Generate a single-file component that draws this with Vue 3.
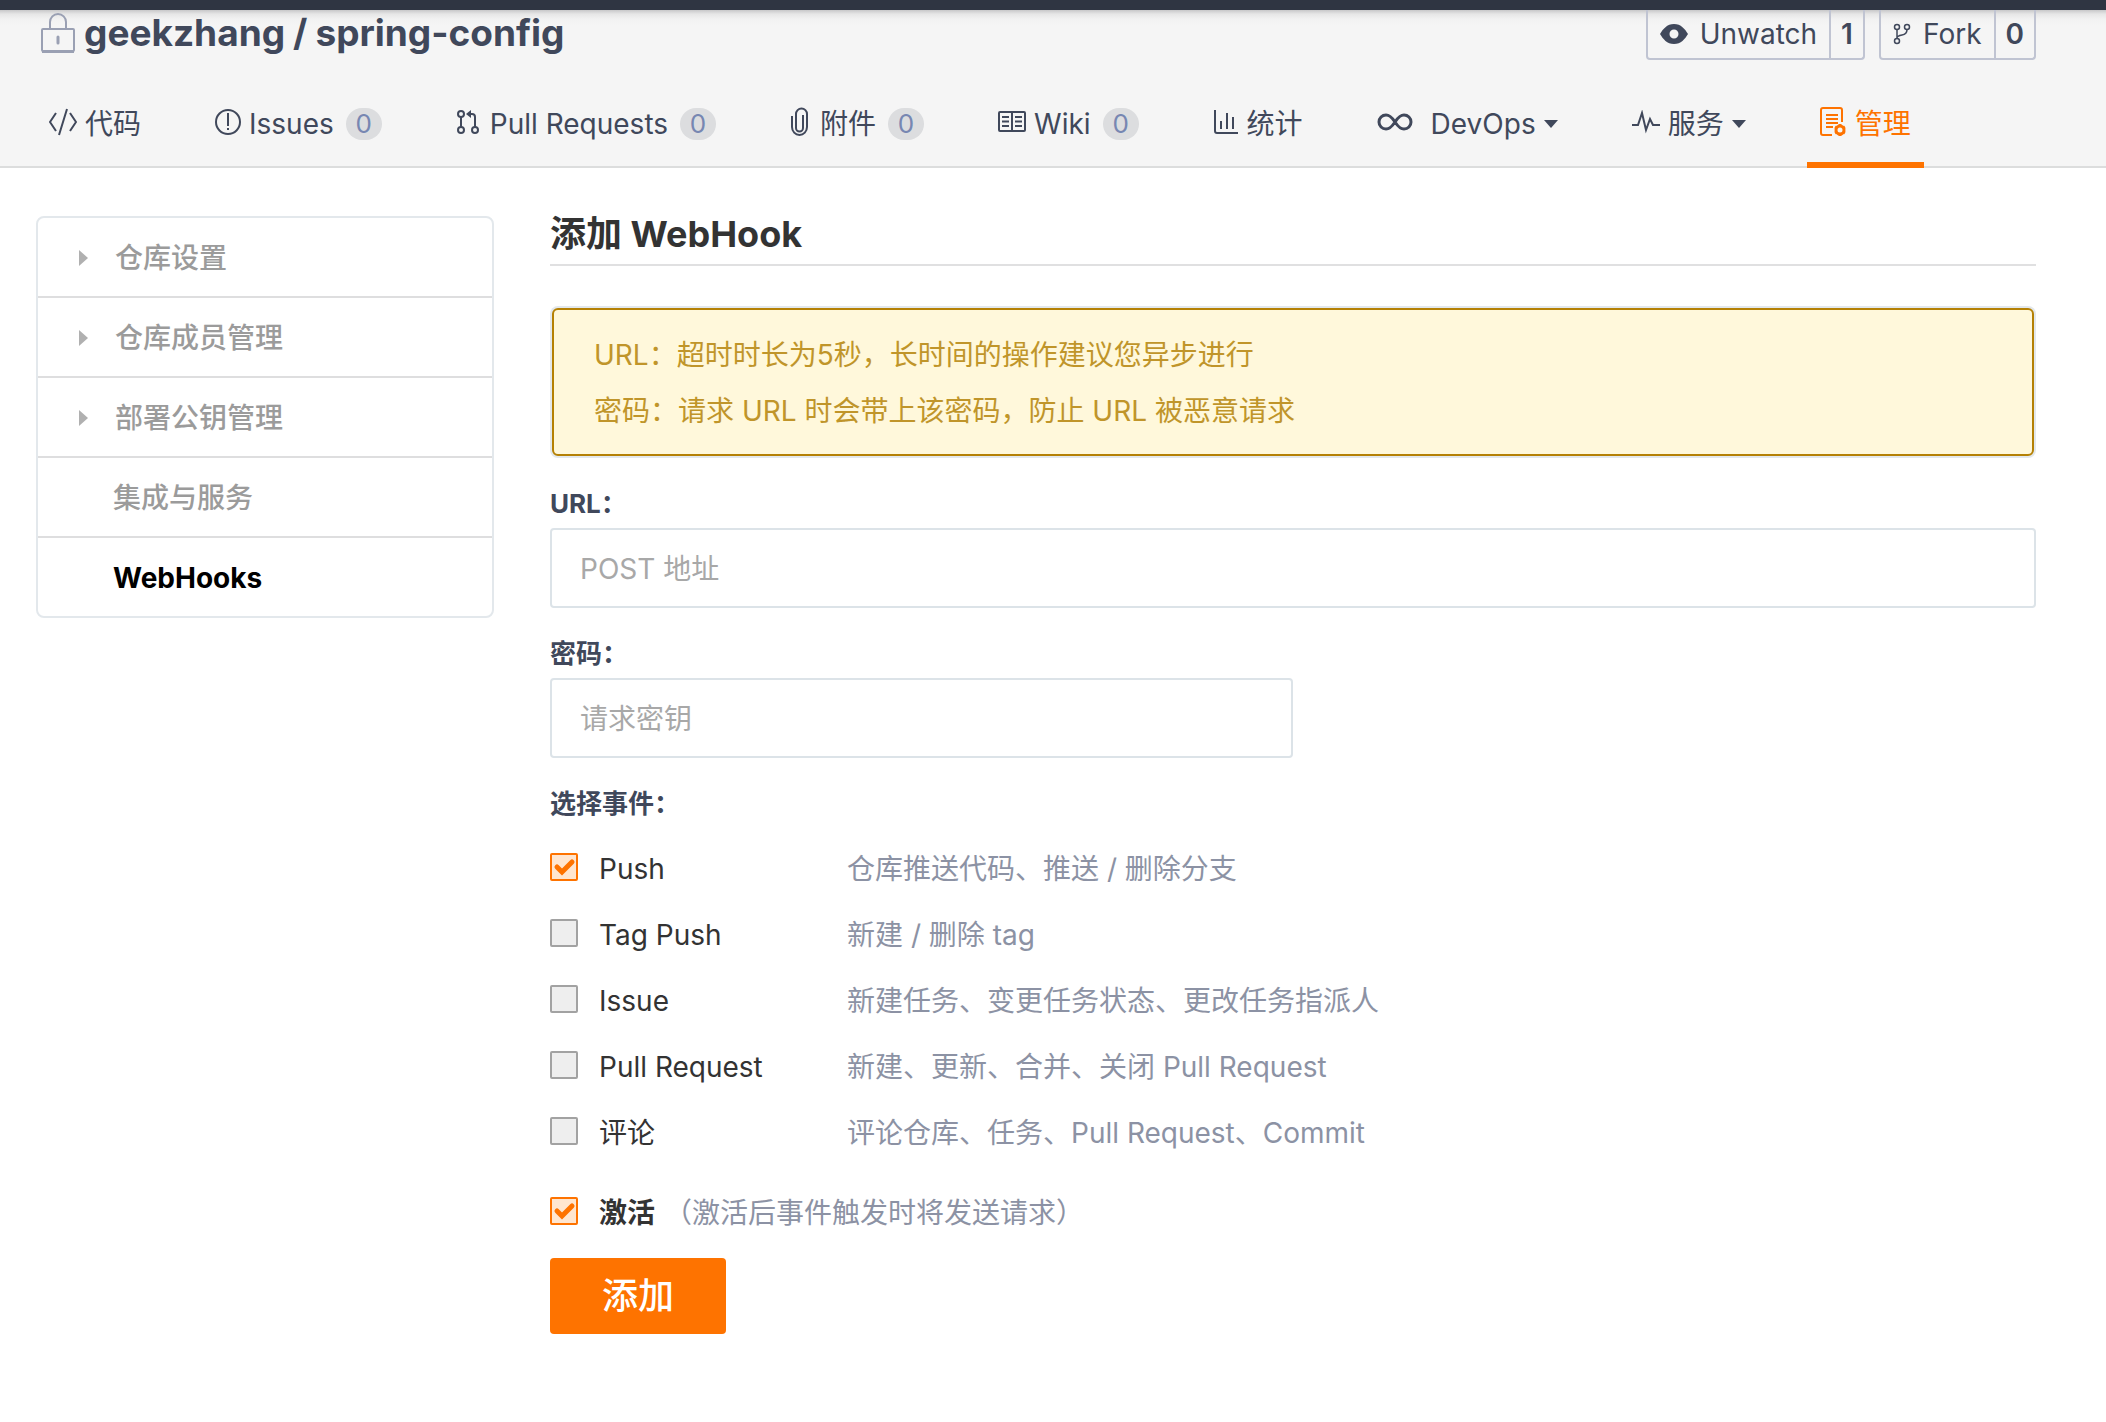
<script setup>
import { ref } from 'vue'

const tabs = [
  { icon: 'code', label: '代码' },
  { icon: 'issue', label: 'Issues', count: 0 },
  { icon: 'pull', label: 'Pull Requests', count: 0 },
  { icon: 'clip', label: '附件', count: 0 },
  { icon: 'wiki', label: 'Wiki', count: 0 },
  { icon: 'chart', label: '统计' },
  { icon: 'infinity', label: 'DevOps', menu: true },
  { icon: 'pulse', label: '服务', menu: true },
  { icon: 'manage', label: '管理', active: true }
]

const sections = [
  { label: '仓库设置', group: true },
  { label: '仓库成员管理', group: true },
  { label: '部署公钥管理', group: true },
  { label: '集成与服务' },
  { label: 'WebHooks', active: true }
]

const events = ref([
  { id: 'push', label: 'Push', hint: '仓库推送代码、推送 / 删除分支', on: true },
  { id: 'tag', label: 'Tag Push', hint: '新建 / 删除 tag', on: false },
  { id: 'issue', label: 'Issue', hint: '新建任务、变更任务状态、更改任务指派人', on: false },
  { id: 'pr', label: 'Pull Request', hint: '新建、更新、合并、关闭 Pull Request', on: false },
  { id: 'note', label: '评论', hint: '评论仓库、任务、Pull Request、Commit', on: false }
])
const url = ref('')
const secret = ref('')
const active = ref(true)
</script>

<template>
  <div class="page">
    <div class="topbar"></div>
    <header class="header">
      <div class="repo">
        <h1 class="title">
          <svg class="lock" width="36" height="42" viewBox="0 0 36 42" fill="none" stroke="#9aa0b3" stroke-width="2">
            <path d="M10 17V10a8 8 0 0 1 16 0v7" />
            <rect x="2" y="17" width="32" height="22" rx="1" />
            <path d="M2 39.500h32" stroke-width="3" />
            <path d="M18 25v6" stroke-width="3" stroke-linecap="round" />
          </svg>
          <a href="#">geekzhang</a><span>/</span><a href="#">spring-config</a>
        </h1>
        <div class="actions">
          <div class="action">
            <button type="button">
              <svg width="28" height="22" viewBox="0 0 28 22"><path fill="#40485b" fill-rule="evenodd" d="M14 1C7 1 3 6 0 11c3 5 7 10 14 10s11-5 14-10C25 6 21 1 14 1zm0 5.500a4.500 4.500 0 1 1 0 9 4.500 4.500 0 0 1 0-9z" /></svg>
              Unwatch
            </button>
            <a href="#">1</a>
          </div>
          <div class="action">
            <button type="button">
              <svg width="18" height="22" viewBox="0 0 18 22" fill="none" stroke="#40485b" stroke-width="1.500"><circle cx="4" cy="4" r="2.500" /><circle cx="14" cy="4" r="2.500" /><circle cx="4" cy="18" r="2.500" /><path d="M4 6.500v9M14 6.500c0 4-2 5-5 5.500s-5 1-5 3" /></svg>
              Fork
            </button>
            <a href="#">0</a>
          </div>
        </div>
      </div>
      <nav class="tabs">
        <a v-for="t in tabs" :key="t.label" href="#" class="tab" :class="{ active: t.active, wide: t.icon === 'infinity' }">
          <svg v-if="t.icon === 'code'" width="28" height="28" viewBox="0 0 28 28"><path d="M7 5 1 14l6 9M21 5l6 9-6 9M18 1 10 27" /></svg>
          <svg v-else-if="t.icon === 'issue'" width="26" height="28" viewBox="0 0 26 28"><circle cx="13" cy="14" r="12" /><path d="M13 5v13M13 20v2" /></svg>
          <svg v-else-if="t.icon === 'pull'" width="26" height="28" viewBox="0 0 26 28"><circle cx="5" cy="6" r="3" /><circle cx="5" cy="22" r="3" /><circle cx="19" cy="22" r="3" /><path d="M5 9v10M19 19V9q0-3-3-3h-4" /><path d="m15 2-5 4 5 4z" fill="currentColor" stroke="none" /></svg>
          <svg v-else-if="t.icon === 'clip'" width="22" height="30" viewBox="0 0 22 30"><path d="M2 9v11a7.500 8 0 0 0 15 0V7a5.500 5.500 0 0 0-11 0v14a3.500 3.500 0 0 0 7 0V8" /></svg>
          <svg v-else-if="t.icon === 'wiki'" width="28" height="24" viewBox="0 0 28 24"><rect x="1" y="2" width="26" height="19" rx="1" /><path d="M14 2v19M4 7h7M4 11.500h7M4 16h7M17 7h7M17 11.500h7M17 16h7" /></svg>
          <svg v-else-if="t.icon === 'chart'" width="26" height="28" viewBox="0 0 26 28"><path d="M2 2v21q0 2 2 2h21M8 13v8M14 5v16M20 9v12" /></svg>
          <svg v-else-if="t.icon === 'infinity'" width="36" height="20" viewBox="0 0 36 20" class="thick"><path d="M18 10C14 4 12 3 9 3a7 7 0 0 0 0 14c3 0 5-1 9-7s6-7 9-7a7 7 0 0 1 0 14c-3 0-5-1-9-7z" /></svg>
          <svg v-else-if="t.icon === 'pulse'" width="28" height="24" viewBox="0 0 28 24"><path d="M0 15h6l4-12 4 17 4-11 3 6h7" /></svg>
          <svg v-else width="27" height="30" viewBox="0 0 27 30"><path d="M22 15V3q0-2-2-2H3Q1 1 1 3v23q0 2 2 2h9M6 8h12M6 12h12M6 16h12M6 20h7" /><circle cx="20" cy="23" r="4" class="thick" /><path d="M20 17v2M20 27v2M15 20l2 1M23 25l2 1M15 26l2-1M23 21l2-1" class="thick" /></svg>
          <span>{{ t.label }}</span>
          <span v-if="t.count !== undefined" class="count">{{ t.count }}</span>
          <i v-if="t.menu" class="caret"></i>
        </a>
      </nav>
    </header>

    <div class="body">
      <nav class="sidebar">
        <a v-for="s in sections" :key="s.label" href="#" :class="{ group: s.group, current: s.active }">{{ s.label }}</a>
      </nav>

      <main class="main">
        <h2>添加 WebHook</h2>
        <div class="notice">
          <p>URL：超时时长为5秒，长时间的操作建议您异步进行</p>
          <p>密码：请求 URL 时会带上该密码，防止 URL 被恶意请求</p>
        </div>
        <form @submit.prevent>
          <label class="name" for="url">URL：</label>
          <input id="url" v-model="url" class="text" type="text" placeholder="POST 地址">
          <label class="name" for="secret">密码：</label>
          <input id="secret" v-model="secret" class="text half" type="text" placeholder="请求密钥">
          <fieldset>
            <legend class="name">选择事件：</legend>
            <div v-for="e in events" :key="e.id" class="event">
              <span class="tick">
                <input :id="e.id" v-model="e.on" type="checkbox">
                <svg v-if="e.on" width="28" height="28" viewBox="0 0 28 28"><path d="M7 14l5 5L22 9" /></svg>
              </span>
              <label :for="e.id">{{ e.label }}</label>
              <span class="hint">{{ e.hint }}</span>
            </div>
          </fieldset>
          <div class="event enable">
            <span class="tick">
              <input id="active" v-model="active" type="checkbox">
              <svg v-if="active" width="28" height="28" viewBox="0 0 28 28"><path d="M7 14l5 5L22 9" /></svg>
            </span>
            <label for="active">激活</label>
            <span class="hint">（激活后事件触发时将发送请求）</span>
          </div>
          <button type="submit" class="submit">添加</button>
        </form>
      </main>
    </div>
  </div>
</template>

<style>
body {
  margin: 0;
  background: #fff;
}
</style>

<style scoped>
* {
  box-sizing: border-box;
}
.page {
  font-family: Inter, "Noto Sans CJK SC", sans-serif;
  font-size: 28px;
  line-height: 40px;
  color: #40485b;
}
a {
  color: inherit;
  text-decoration: none;
}
.topbar {
  height: 10px;
  background: #2f3542;
}
.header {
  padding: 0 70px 0 36px;
  background: linear-gradient(#c8c8c9, #e6e6e6 4px, #f2f2f2 9px, #f5f5f5 15px);
  border-bottom: 2px solid #dcdddd;
}
.repo {
  display: flex;
  justify-content: space-between;
  align-items: flex-start;
}
.title {
  display: flex;
  align-items: center;
  gap: 8px;
  margin: 0;
  font-size: 37px;
  font-weight: 700;
  line-height: 46px;
}
.lock {
  margin-left: 4px;
}
.actions {
  display: flex;
  gap: 14px;
}
.action {
  display: flex;
  height: 50px;
  border: 2px solid #c0c4d2;
  border-top: 0;
  border-radius: 0 0 4px 4px;
}
.action button {
  display: flex;
  align-items: center;
  gap: 12px;
  padding: 0 12px;
  border: 0;
  background: none;
  font: inherit;
  color: inherit;
}
.action a {
  display: flex;
  align-items: center;
  padding: 0 10px;
  border-left: 2px solid #c0c4d2;
  font-weight: 600;
}
.tabs {
  display: flex;
  gap: 48px;
  margin-bottom: -2px;
}
.tab {
  display: flex;
  align-items: center;
  gap: 8px;
  height: 108px;
  padding: 34px 13px 8px;
  border-bottom: 6px solid transparent;
  white-space: nowrap;
}
.tab svg {
  margin-bottom: 4px;
  fill: none;
  stroke: currentColor;
  stroke-width: 2;
}
.tab.wide svg {
  margin-right: 10px;
}
.tab .thick {
  stroke-width: 3;
}
.tab.active {
  color: #fe7300;
  border-color: #fe7300;
}
.count {
  width: 36px;
  height: 32px;
  margin-left: 4px;
  border-radius: 16px;
  background: #dcdddf;
  color: #7787b2;
  font-size: 26px;
  line-height: 32px;
  text-align: center;
}
.caret {
  border: 7px solid transparent;
  border-top: 8px solid #40485b;
  border-bottom: 0;
}
.body {
  display: flex;
  align-items: flex-start;
  gap: 56px;
  padding: 48px 70px 88px 36px;
}
.sidebar {
  flex: none;
  width: 458px;
  border: 2px solid #e3e8ec;
  border-radius: 8px;
}
.sidebar a {
  display: flex;
  align-items: center;
  height: 78px;
  padding: 2px 0 0 75px;
  color: #9b9b9b;
  font-weight: 500;
}
.sidebar a + a {
  height: 80px;
  border-top: 2px solid #dededf;
}
.sidebar .group {
  gap: 27px;
  padding-left: 41px;
}
.group::before {
  content: "";
  border: 8px solid transparent;
  border-left: 9px solid #b0b0b0;
  border-right: 0;
}
.sidebar .current {
  color: #000;
  font-weight: 700;
}
.main {
  flex: 1;
}
h2 {
  margin: 0;
  padding-bottom: 12px;
  border-bottom: 2px solid #e0e0e1;
  color: #333;
  font-size: 36px;
  font-weight: 700;
  line-height: 36px;
}
.notice {
  margin: 42px 2px 24px;
  padding: 17px 40px 15px;
  border: 2px solid #b58105;
  border-radius: 6px;
  background: #fff8db;
  box-shadow: 0 0 0 2px #e3e8ec;
  color: #c0952a;
  line-height: 56px;
}
.notice p {
  margin: 0;
}
.name {
  display: block;
  padding: 0;
  font-size: 26px;
  font-weight: 700;
  line-height: 48px;
}
.text {
  display: block;
  width: 100%;
  height: 80px;
  margin-bottom: 22px;
  padding: 2px 28px 0;
  border: 2px solid #dce3e8;
  border-radius: 4px;
  outline: 0;
  font: inherit;
  color: #333;
}
.text::placeholder {
  color: #a8a8a8;
  opacity: 1;
}
.half {
  width: 50%;
}
fieldset {
  margin: 0;
  padding: 0;
  border: 0;
}
legend {
  margin-bottom: 8px;
}
.event {
  display: flex;
  align-items: center;
  height: 66px;
}
.event label {
  width: 269px;
  padding-left: 21px;
  color: #333;
}
.hint {
  color: #8c92a4;
}
.tick {
  display: grid;
  width: 28px;
  height: 28px;
  margin-bottom: 4px;
}
.tick input,
.tick svg {
  grid-area: 1 / 1;
}
.tick input {
  appearance: none;
  width: 28px;
  height: 28px;
  margin: 0;
  border: 2px solid #a2a2a2;
  border-radius: 2px;
  background: #eee;
}
.tick input:checked {
  border-color: #fe7300;
  background: #ffe6d0;
}
.tick svg {
  pointer-events: none;
  fill: none;
  stroke: #fe7300;
  stroke-width: 5;
  stroke-linecap: round;
}
.enable {
  margin-top: 14px;
}
.enable label {
  width: 86px;
  font-weight: 700;
}
.submit {
  display: block;
  width: 176px;
  height: 76px;
  margin-top: 12px;
  border: 0;
  border-radius: 4px;
  background: #fe7300;
  color: #fff;
  font: inherit;
  font-size: 36px;
  font-weight: 500;
}
</style>
